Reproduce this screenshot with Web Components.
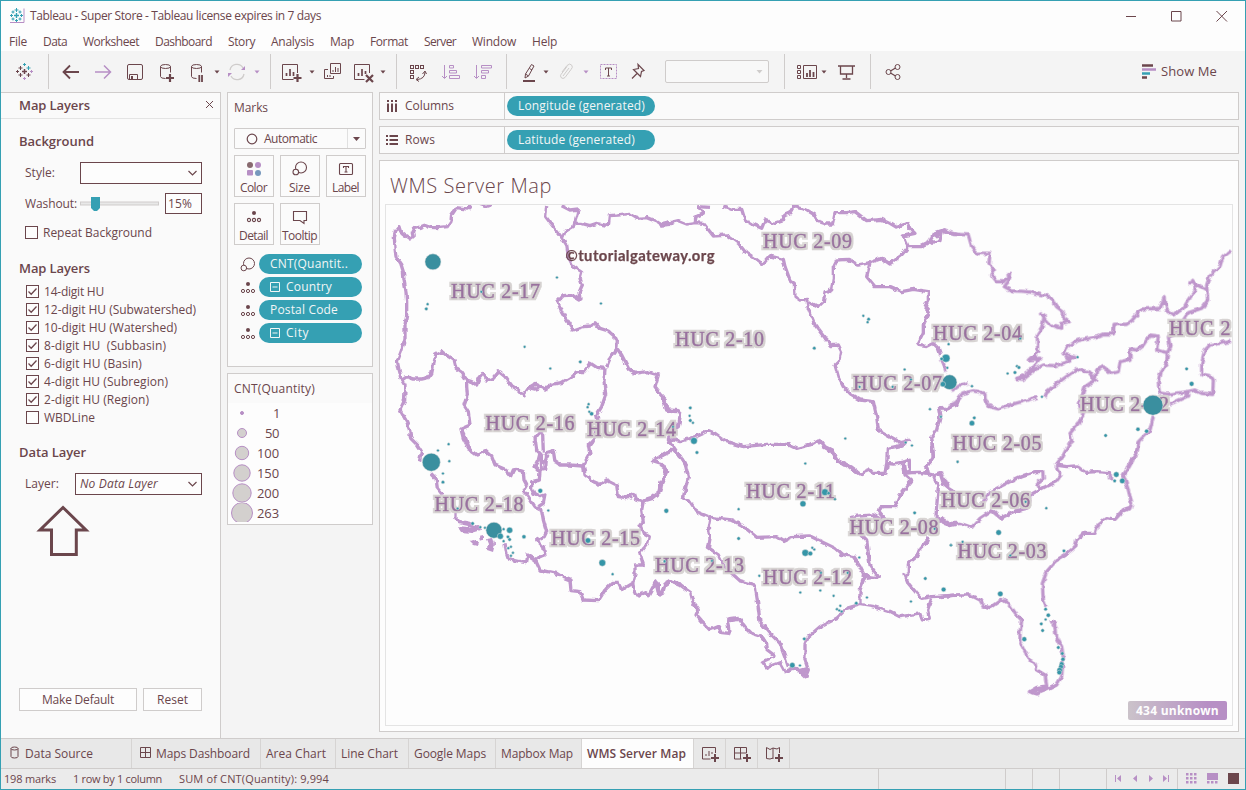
<!DOCTYPE html>
<html lang="en">
<head>
<meta charset="utf-8">
<title>Tableau - Super Store</title>
<style>
html,body{margin:0;height:100%}
body{font:12px "Open Sans","Noto Sans",sans-serif;color:#6b464c;background:#f4f4f4;overflow:hidden}
</style>
</head>
<body>
<tb-window></tb-window>
<script>
const INK='#6b464c',TEAL='#35a0b3',PUR='#b78fc5',GREY='#cfcccb';
const define=(name,css,html,after)=>customElements.define(name,class extends HTMLElement{
  connectedCallback(){
    if(this.shadowRoot)return;
    this.attachShadow({mode:'open'}).innerHTML=`<style>*{box-sizing:border-box}${css}</style>`+(typeof html==='function'?html(this):html);
    if(after)after(this);
  }
});

/* Text set to a known measure by adjusting its tracking */
define('fit-text',':host{display:inline-block;white-space:pre;flex:none}','<slot></slot>',el=>{
  const w=+el.getAttribute('w');if(!w)return;
  const n=el.textContent.length;
  el.style.letterSpacing=((w-el.getBoundingClientRect().width)/n).toFixed(3)+'px';
});

define('title-bar',`:host{display:flex;align-items:center;height:29px;padding:0 16px 0 8px;background:#fdfdfd}
.t{margin-left:5px;flex:1;padding-bottom:1px}svg{flex:none;display:block}`,
`<svg width="16" height="16" viewBox="0 0 16 16" fill="none"><path d="M15 .5V14.5H1" stroke="${PUR}"/><path d="M7.500 5v5M5 7.500h5" stroke="${TEAL}" stroke-width="1.400"/><path d="M7.500 0v4M5.500 2h4M7.500 11v3M6 12.500h3M1 7.500h3M2.500 6v3M11 7.500h3M12.500 6v3M4 2.500v3M2.500 4h3M11 2.500v3M9.500 4h3M4 9.500v3M2.500 11h3M11 9.500v3M9.500 11h3" stroke="${TEAL}"/></svg>
<span class="t"><fit-text w="291">Tableau - Super Store - Tableau license expires in 7 days</fit-text></span>
<svg width="104" height="16" viewBox="1125 8 104 16" fill="none" stroke="${INK}"><path d="M1126 16.500h10M1171.500 11.500h9.500v9.500h-9.500zM1216.500 11l10.500 10.500M1227 11l-10.500 10.500"/></svg>`);

define('menu-bar',`:host{display:flex;gap:16px;align-items:center;height:21px;padding:2px 8px 0;background:#fdfdfd}`,
[['File',18],['Data',24],['Worksheet',56],['Dashboard',57],['Story',27],['Analysis',43],['Map',24],['Format',38],['Server',32],['Window',44],['Help',25]].map(([t,w])=>`<fit-text w="${w}">${t}</fit-text>`).join(''));

const caret=(x,c=INK)=>`<path d="M${x-2.5} 70.500h5l-2.500 3z" fill="${c}" stroke="none"/>`;
const tools=[
 [16,17,`<path d="M24.500 69v5M22 71.500h5" stroke-width="1.500"/><path d="M24.500 63v3M23 64.500h3M28.500 66v4M26.500 68h4" stroke="${TEAL}"/><path d="M20.500 66v4M18.500 68h4M20.500 73v4M18.500 75h4M28.500 73v4M26.500 75h4M17.500 70v3M16 71.500h3"/><path d="M24.500 77v3M23 78.500h3M31.500 70v3M30 71.500h3" stroke="${PUR}"/>`],
 [48,1,'|'],
 [62,18,`<path d="M79 72H64M70 65.500L63.500 72l6.500 6.500" stroke-width="1.800"/>`],
 [94,18,`<path d="M95 72h15M104 65.500l6.500 6.500-6.500 6.500" stroke="${PUR}" stroke-width="1.500"/>`],
 [126,18,`<rect x="127.500" y="64.500" width="15" height="15" rx="1.500"/><path d="M129.500 79v-4.500h8V79"/><path d="M132 76v3" stroke-width="2"/>`],
 [159,16,`<path d="M160.500 66.500v10q0 2 5 2M170.500 66.500v6"/><ellipse cx="165.500" cy="66.500" rx="5" ry="2"/><path d="M170 74v8M166 78h8" stroke-width="2.200"/>`],
 [190,15,`<path d="M191.500 66.500v10q0 2 5 2M201.500 66.500v6"/><ellipse cx="196.500" cy="66.500" rx="5" ry="2"/><path d="M199.300 75v7M202 75v7" stroke-width="1.800"/>`],
 [214,6,caret(217)],
 [228,18,`<g stroke="${GREY}" stroke-width="1.300"><path d="M230 70a7 7 0 0 1 13-2M244 74a7 7 0 0 1-13 2"/></g><path d="M241 70h4v-4zM232 73h-4v4z" fill="${PUR}" stroke="none"/>`],
 [254,6,caret(257,PUR)],
 [270,1,'|'],
 [281,21,`<path d="M297.500 73v-8.500h-15v15h11"/><path d="M286.500 76v-3M290 76v-7M293.500 76v-4" stroke-width="1.700"/><path d="M297.500 74v8M293.500 78h8" stroke-width="2.200"/>`],
 [309,6,caret(312)],
 [324,18,`<path d="M330.500 63.500h10v10h-10zM328 69.500h-3.500v9h9V76"/><path d="M333 72v-2M335.500 72v-5M338 72v-4M327.500 77v-2M330 77v-2"/>`],
 [353,21,`<path d="M369.500 73v-8.500h-15v15h10"/><path d="M358.500 76v-3M362 76v-7M365.500 74v-3" stroke-width="1.700"/><path d="M366 75l7 7M373 75l-7 7" stroke-width="2.200"/>`],
 [380,6,caret(383)],
 [396,1,'|'],
 [409,18,`<rect x="410.500" y="65.500" width="3" height="3"/><rect x="415.500" y="65.500" width="3" height="3"/><rect x="420.500" y="65.500" width="3" height="3"/><rect x="410.500" y="70.500" width="3" height="3"/><rect x="410.500" y="75.500" width="3" height="3"/><path d="M425 72q0 7-8 7.500M422.500 74l2.500-3 1.500 3M419 77l-3 2.500 3 2"/>`],
 [441,20,`<g stroke="${PUR}"><path d="M444.500 65v13M442 76l2.500 2.500 2.500-2.500M449.500 65.500h4v2.500h-4zM449.500 70.500h7v2.500h-7zM449.500 75.500h10v3h-10z"/></g>`],
 [473,20,`<g stroke="${PUR}"><path d="M476.500 65v13M474 76l2.500 2.500 2.500-2.500M481.500 65.500h10v2.500h-10zM481.500 70.500h7v2.500h-7zM481.500 75.500h4v3h-4z"/></g>`],
 [506,1,'|'],
 [522,14,`<path d="M531.500 64.500l2.500 1.500-5.500 10-3.500 2 .5-4zM525.500 74l3 2M529.500 68.500l2.500 1.500"/><path d="M523 81h12" stroke-width="2"/>`],
 [543,6,caret(546)],
 [559,15,`<path d="M562 72l5-6.500q3-3 5 0 1 2-1 4l-6 8q-2 2-4 0-1-2 0-3l6-8M563 76l6-8" stroke="${GREY}"/>`],
 [583,6,caret(586,PUR)],
 [599,19,`<rect x="600.500" y="64.500" width="16" height="14" stroke="${PUR}" stroke-dasharray="2 1"/><path d="M605.500 70v-2h6v2M608.500 68v8M607 76h3"/>`],
 [631,14,`<path d="M638 64.500l6 6-2.500 1-1 5-7-7 5-1zM637 73.500l-5 5" stroke-width="1.200"/>`],
 [665,104,`<rect x="665.500" y="60.500" width="103" height="22" rx="1.500" fill="#f8f8f8" stroke="${GREY}"/><path d="M756.500 70h6l-3 3.500z" fill="${GREY}" stroke="none"/>`],
 [784,1,'|'],
 [796,22,`<path d="M797.500 65.500h3v3h-3zM797.500 70.500h3v3h-3zM797.500 75.500h3v3h-3zM803.500 65.500h13v13h-13z"/><path d="M807 77v-4M810 77v-7M813.500 77v-5" stroke-width="1.800"/>`],
 [821,6,caret(824)],
 [837,19,`<path d="M838 66h17M840.500 66v8h12v-8M846.500 74v4M842.500 79h8" stroke-width="1.300"/>`],
 [870,1,'|'],
 [885,18,`<circle cx="888.500" cy="72" r="2.500"/><circle cx="897.500" cy="67" r="2.500"/><circle cx="897.500" cy="77" r="2.500"/><path d="M890.500 71l5-3M890.500 73l5 3" stroke-width="1.300"/>`],
 [1141,17,`<g stroke-width="2.500"><path d="M1142 65.500h11"/><path d="M1142 69.500h14" stroke="${PUR}"/><path d="M1142 73.500h8" stroke="${TEAL}"/><path d="M1142 77.500h5"/></g>`]
];
let cursor=1;
define('tool-bar',`:host{display:flex;align-items:center;height:41px;background:#f4f4f4}svg{flex:none;display:block;overflow:visible}fit-text{font-size:13px;margin-left:3px;padding-bottom:2px}`,
tools.map(([x,w,s])=>{const m=x-cursor;cursor=x+w;const sep=s==='|';
 return sep?`<i style="margin-left:${m}px;width:1px;height:35px;background:${GREY}"></i>`:
 `<svg style="margin-left:${m}px" width="${w}" height="24" viewBox="${x} 60 ${w} 24" fill="none" stroke="${INK}">${s}</svg>`}).join('')+'<fit-text w="56">Show Me</fit-text>');

define('check-box',`:host{display:flex;align-items:center;gap:5px}i{width:13px;height:13px;border:1px solid ${INK};background:#fdfdfd;flex:none}svg{display:block}:host([on]) path{display:inline}path{display:none}`,
`<i><svg width="11" height="11" viewBox="0 0 11 11" fill="none" stroke="${INK}" stroke-width="1.300"><path d="M1.500 5.500l2.700 2.700L9.500 2.500"/></svg></i><slot></slot>`);
define('drop-down',`:host{display:flex;align-items:center;justify-content:space-between;height:22px;border:1px solid ${INK};background:#fdfdfd;padding:0 4px;flex:none}`,
`<span style="padding-bottom:1px"><slot></slot></span><svg width="9" height="6" fill="none" stroke="${INK}" stroke-width="1.200"><path d="M.5 1l4 4 4-4"/></svg>`);
define('push-button',`:host{display:flex;align-items:center;justify-content:center;height:23px;border:1px solid ${GREY};background:#fdfdfd;padding-bottom:1px}`,'<slot></slot>');

const layers=[['14-digit HU',60],['12-digit HU (Subwatershed)',152],['10-digit HU (Watershed)',133],['8-digit HU  (Subbasin)',122],['6-digit HU (Basin)',98],['4-digit HU (Subregion)',124],['2-digit HU (Region)',105],['WBDLine',51]];
define('layers-panel',`:host{display:flex;flex-direction:column;background:#fafafa;border:1px solid ${GREY};border-width:1px 1px 0 0}
header{display:flex;justify-content:space-between;align-items:center;height:26px;padding:0 6px 2px 18px;border-bottom:1px solid #e4e4e4}
b{font-weight:600;font-size:13px}.h{height:24px;display:flex;align-items:center;padding-left:18px}
.r{display:flex;align-items:center;padding-left:24px}.r>fit-text{padding-bottom:1px}
.list{display:grid;grid-auto-rows:18px;padding-left:25px;align-items:start}
.list check-box{height:17px}
.sl{width:79px;height:16px;margin:0 6px 0 3px}
.in{width:37px;height:21px;border:1px solid ${INK};background:#fdfdfd;display:flex;align-items:center;padding-left:2px}
footer{margin-top:auto;display:flex;gap:6px;padding:0 0 27px 18px}`,
`<header><b><fit-text w="71">Map Layers</fit-text></b><svg width="9" height="9" fill="none" stroke="${INK}"><path d="M1 1l7 7M8 1L1 8"/></svg></header>
<div class="h" style="margin-top:10px"><b><fit-text w="75">Background</fit-text></b></div>
<div class="r" style="height:40px"><fit-text w="30">Style:</fit-text><drop-down style="width:122px;margin-left:25px"></drop-down></div>
<div class="r" style="height:21px"><fit-text w="52">Washout:</fit-text><svg class="sl" viewBox="0 0 79 16"><rect x=".5" y="6" width="78" height="3" fill="#e8e8e8" stroke="${GREY}"/><path d="M11 1h9v11l-3 3h-3l-3-3z" fill="${TEAL}"/></svg><span class="in"><fit-text w="24">15%</fit-text></span></div>
<div class="r" style="height:37px;margin-bottom:1px"><check-box><fit-text w="109">Repeat Background</fit-text></check-box></div>
<div class="h" style="height:31px"><b><fit-text w="71">Map Layers</fit-text></b></div>
<div class="list">${layers.map(([t,w],i)=>`<check-box ${i<7?'on':''}><fit-text w="${w}">${t}</fit-text></check-box>`).join('')}</div>
<div class="h" style="margin:13px 0 1px"><b><fit-text w="67">Data Layer</fit-text></b></div>
<div class="r" style="height:38px"><fit-text w="34">Layer:</fit-text><drop-down style="width:127px;margin-left:16px"><em><fit-text w="78">No Data Layer</fit-text></em></drop-down></div>
<svg width="56" height="56" style="margin-left:34px" viewBox="35 503 56 56"><path d="M63 507.500l23 22.500H76.300v24.500H51.500V530H40z" fill="none" stroke="${INK}" stroke-width="3"/></svg>
<footer><push-button style="width:118px"><fit-text w="72">Make Default</fit-text></push-button><push-button style="width:59px"><fit-text w="31">Reset</fit-text></push-button></footer>`);

const sizeIcon='<circle cx="9" cy="6.500" r="5.500"/><circle cx="3.800" cy="11" r="2.800" fill="#fafafa"/>';
const detailIcon=`<circle cx="8" cy="4" r="2" fill="${INK}" stroke="none"/><circle cx="3" cy="11" r="1.600"/><circle cx="8" cy="11" r="1.600"/><circle cx="13" cy="11" r="1.600"/>`;
const cardIcons={
 Color:`<g stroke="none" fill="${PUR}"><circle cx="4" cy="4" r="3" fill="${INK}" opacity=".8"/><circle cx="12" cy="4" r="3"/><rect x="1" y="9" width="6" height="5.500" rx="1"/><circle cx="12" cy="12" r="3" fill="#7798bd"/></g>`,
 Size:sizeIcon,
 Label:'<rect x="1.500" y="2.500" width="13" height="11" rx="1"/><path d="M5.500 7V5.500h5V7M8 5.500v5.500M6.500 11h3"/>',
 Detail:detailIcon,
 Tooltip:'<path d="M1.500 2.500h13v9h-2.500v3l-4-3H1.500z"/>'};
define('marks-button',`:host{display:flex;flex-direction:column;align-items:center;width:40px;height:42px;border:1px solid ${GREY};background:#fbfbfb;padding:5px 1px 0 0}svg{display:block;flex:none}fit-text{line-height:18px;margin-top:2px}`,
el=>`<svg width="16" height="16" fill="none" stroke="${INK}" stroke-width="1.100">${cardIcons[el.getAttribute('name')]}</svg><fit-text w="${el.getAttribute('w')}">${el.getAttribute('name')}</fit-text>`);
define('field-pill',`:host{display:flex;align-items:center;height:20px;border-radius:10px;background:${TEAL};color:#f2f6f6;padding:0 0 1px 11px}svg{margin-right:6px;display:none}:host([box]) svg{display:block;margin-top:1px}`,
`<svg width="10" height="10" fill="none" stroke="#f2f6f6"><path d="M.5.500h9v9h-9zM2.500 5h5"/></svg><slot></slot>`);
define('marks-card',`:host{display:block;height:275px;border:1px solid ${GREY};background:#fafafa;padding:0 6px}
h3{margin:0;font:inherit;height:35px;display:flex;align-items:center}
.dd{display:flex;align-items:center;height:21px;border:1px solid ${GREY};border-radius:1px;background:#fbfbfb}
.dd i{margin-left:auto;width:18px;height:19px;border-left:1px solid #e0e0e0;display:grid;place-items:center}
.g{display:grid;grid-template-columns:repeat(3,40px);gap:6px;margin-top:6px}
.f{display:flex;gap:3px;align-items:center;height:20px;margin-bottom:3px;padding-left:6px}.f field-pill{width:103px}svg{display:block;flex:none}`,
`<h3><fit-text w="34" style="margin-top:-6px">Marks</fit-text></h3>
<div class="dd"><svg style="margin:0 6px 0 11px" width="12" height="12" fill="none" stroke="${INK}" stroke-width="1.200"><circle cx="6" cy="6" r="4.800"/></svg><fit-text w="53">Automatic</fit-text><i><svg width="7" height="4"><path d="M0 0h7L3.500 4z" fill="${INK}"/></svg></i></div>
<div class="g"><marks-button name="Color" w="27"></marks-button><marks-button name="Size" w="21"></marks-button><marks-button name="Label" w="27"></marks-button><marks-button name="Detail" w="29"></marks-button><marks-button name="Tooltip" w="35"></marks-button></div>
<div style="height:9px"></div>
${[['CNT(Quantit..',78],['Country',46,1],['Postal Code',68],['City',23,1]].map(([t,w,b],i)=>`<div class="f"><svg width="16" height="15" fill="none" stroke="${INK}">${i?detailIcon:sizeIcon}</svg><field-pill ${b?'box':''}><fit-text w="${w}">${t}</fit-text></field-pill></div>`).join('')}`);
define('size-legend',`:host{display:block;height:152px;border:1px solid ${GREY};background:#fdfdfd;overflow:hidden}
h3{margin:0;font:inherit;height:29px;display:flex;align-items:center;padding-left:6px;background:#fafafa}
.r{display:flex;align-items:center;height:20px;font-size:13px}.r:last-child svg{clip-path:inset(0 0 1px)}svg{margin-left:3px}.r fit-text{margin-left:auto}.r span{display:flex;width:26px;margin-right:auto}`,
`<h3><fit-text w="81">CNT(Quantity)</fit-text></h3>`+[[1,1.500,6],[50,4.500,14],[100,6.700,22],[150,8.200,22],[200,9.200,22],[263,10.500,22]].map(([n,r,w])=>`<div class="r"><svg width="22" height="20"><circle cx="11" cy="10" r="${r}" fill="${n<2?PUR:'#d3d0ce'}" stroke="${PUR}"/></svg><span><fit-text w="${w}">${n}</fit-text></span></div>`).join(''));

define('data-shelf',`:host{display:flex;height:28px;border:1px solid ${GREY};background:#fafafa;align-items:center}
.n{display:flex;align-items:center;gap:7px;width:125px;height:26px;padding-left:6px;border-right:1px solid ${GREY}}.n fit-text{padding-bottom:1px}
field-pill{width:148px;margin-left:2px}`,
el=>{const c=el.getAttribute('name')==='Columns';return `<div class="n"><svg width="12" height="12" fill="none" stroke="${INK}" stroke-width="2">${c?'<path d="M2 0v2M2 3.500v8.500M6 0v2M6 3.500v8.500M10 0v2M10 3.500v8.500"/>':'<path d="M0 2h2M3.500 2h8.500M0 6h2M3.500 6h8.500M0 10h2M3.500 10h8.500"/>'}</svg><fit-text w="${c?49:30}">${c?'Columns':'Rows'}</fit-text></div><field-pill><fit-text w="${c?127:117}">${c?'Longitude':'Latitude'} (generated)</fit-text></field-pill>`});

/* Basin outlines, stored per map tile: origin of the tile, then polylines in thirds of a pixel */
const tiles=[
[380,195,[
'335,28 318,34 300,28 M275,30 262,42 230,38 215,60 213,80 203,95 180,97 165,98 148,97 140,90 130,92 120,97 103,100 97,112 100,125 90,132 75,122 62,112 57,95 47,108 43,125 45,160 48,185 62,205 70,230 72,255 78,290 80,320 80,360 75,390 75,430 65,465 52,500 58,530 65,555 75,572 74,615 60,645 80,680 88,700 92,730 112,750 125,770',
'65,555 80,545 100,552 125,552 145,548 155,535 160,510 167,480 185,470 205,485 222,495 228,520 245,532 260,555 275,560 290,570 298,550 310,535 322,558 340,550 357,530 375,545 395,572 415,585 430,602 445,580 465,568 495,582 520,567 545,563 570,548 590,530 612,530 632,505 650,517 675,520',
'445,578 465,582 490,574','675,520 672,560 677,600 665,635 650,660 657,690 640,735 625,755',
'260,555 260,575 262,600 252,630 265,650 270,690 243,702 250,730 265,758 278,775',
'500,30 497,65 520,95 547,130 560,150 565,185 580,215 605,232 600,250 607,270 597,292 600,315 575,300 550,302 533,320 545,350 560,375 580,405 610,395 635,393 645,383 660,400 685,408 705,425 712,440 710,462 690,490 680,515',
'547,130 555,110 580,95 588,70 595,42 570,45 545,32','588,85 605,85 630,92 650,85 685,92 688,62 715,60 745,55 770,70 800,68 830,80 845,90 870,88',
'712,462 725,480 745,520 765,535 800,530 835,540 825,575 845,600 860,645 880,650']],
[380,430,[
'125,65 118,95','153,130 168,145 172,175 188,195','228,245 228,265 240,278 262,282 280,286','375,340 380,370 385,385 400,390 420,395 440,398 443,375 465,388',
'245,0 255,20 270,60 290,75 315,62 335,80 345,105 375,118 392,138 400,120 410,118 430,125 432,150 440,165 430,182 445,200 465,230 485,240 490,270 500,305 493,320 470,330 490,350 495,375 465,388',
'490,65 488,15 478,8 465,25 470,60 480,70 475,90 465,110 480,125 478,150 455,155 455,175 462,190 480,200 495,195 490,220 475,230','483,70 485,120 497,118 500,68 520,62 525,95 540,105 570,105 608,108','497,70 503,80 492,100','640,30 625,45 630,70 610,105 615,135 640,155 660,163 680,150 710,165 715,200 735,203 760,190 765,205 790,213 785,240 790,275 780,285 790,310 808,320 803,340 780,370 790,405 765,405 765,435 758,460 725,480 715,460 695,460 675,480 655,512 610,510 600,485 573,482 570,450 545,440 530,430 505,425 480,420 465,388',
'740,195 755,205','758,460 765,490 778,495 795,488 805,497 820,470 828,452 830,465 838,495 848,490 855,462 875,452 900,465','828,455 835,460 835,490',
'790,213 815,205 840,185 845,160 860,125 845,100 820,93 840,80 870,65 880,50']],
[660,200,[
'0,75 30,68 55,62 80,72 105,68 130,70 160,108 200,105 235,130 255,155 285,175 308,193 330,168 370,178 375,200 390,240 403,250 405,290 420,300 440,298 445,325 465,375 495,415 515,437 535,435 545,455 540,480 525,495 535,530 550,560 575,585 600,600 640,605 650,650 655,690 685,708 720,728 750,720',
'105,68 108,50 130,40 115,20 150,22','190,18 215,28 245,28 255,60 275,72 305,85 315,60 345,70 370,62 375,45 390,38 400,20 440,30 465,45 475,65 495,72 518,72 525,38 560,38 585,35 620,62 665,58 690,70 710,82 740,68 750,85 765,100 730,108 745,140 780,140 810,125 820,100 850,90 870,100 900,105','810,128 840,122 845,95 820,110 835,105','368,45 375,62',
'745,140 725,165 690,192 665,175 630,188 595,195 565,178 530,180 520,200 520,235 515,270 495,275 490,305 475,320 445,305','500,268 515,275',
'630,188 620,230 645,260 690,260 725,275 760,268 805,275 805,300 795,320 808,335 790,375 790,400 772,435 800,440 820,430 835,445 842,465',
'0,585 15,600 20,630 55,632 62,640 55,680 35,690 45,720 25,720 40,745 0,770','40,745 58,765 80,800','25,700 28,725','45,720 60,725 90,715 110,708 145,692 165,700 200,725 250,740 320,733 385,733 410,745 450,735 475,720 490,740 515,755 530,780 570,805',
'680,800 682,745 730,735 742,718','835,625 860,628 890,615 900,590','835,620 840,650 830,690 815,710 820,770 800,800','848,490 852,505']],
[660,440,[
'0,75 15,85 15,110 2,130 2,150','40,20 75,70 85,110 70,175 90,185 110,215 150,232','480,0 495,20 515,30 530,60 570,80 600,102 630,90 640,100 675,100 680,70 700,72 735,65 748,60 748,90 735,100 755,98 780,97 800,100 820,105','680,70 680,90','730,70 735,105 755,122 720,165 705,200 665,200 655,215 672,235','795,80 805,95',
'570,232 600,228 640,225 665,240','605,285 620,300 625,340 630,375 655,410 620,415',
'150,232 215,240 245,255 290,292 350,290 370,302 395,290 450,288 485,305 525,325 545,343 580,350 600,380 615,410 600,450 600,493','605,405 640,412',
'150,232 145,260 150,295 145,325 175,345 190,375 215,400 240,422 285,435 292,480 300,545 330,580 360,610 375,650 385,680',
'0,465 15,435 35,422 60,435 92,458 100,490 115,510 108,525 125,545 150,570 175,560 185,578 207,580 203,540 235,535 255,560 275,580 305,590 320,610 322,630 342,645 330,655 307,665 320,682 360,668 375,695 400,685 410,685 437,710 445,690 435,660 435,615 445,590 480,560 530,535 560,505 600,493 640,500 690,515 720,530 780,522 787,540 808,535 803,510 815,475','420,692 445,685','425,700 445,692',
'805,290 800,305 780,325 770,350 745,370 745,400 735,405 745,430 770,460 785,475 815,470 900,465','820,105 835,140 830,200 828,230 850,250 870,257 900,250','820,105 840,98 850,130 880,155','815,0 820,50 800,80 800,100']],
[940,200,[
'0,110 10,90 45,103 85,105 95,140 110,160 150,160 147,190 163,210 155,225 170,245 190,245 212,220 205,245 193,260 215,272 265,275 330,290 350,320 370,335 370,355 385,365 365,370 365,385 330,375 312,355 300,335','200,230 210,235','298,340 312,345 312,355 305,385 292,405 293,455 265,480 300,475 275,505 260,525 230,535 250,538 290,505 310,495 345,497 375,487 405,470 370,462 385,440 410,422 470,410 490,402 520,402 522,373 560,373 575,362 605,327 660,325 675,290 680,330 700,345 730,325 745,300 765,272 765,250 745,248','255,520 285,502','285,462 290,480','375,470 390,480 400,465','668,310 680,312','755,238 765,250 800,268','873,152 848,172 840,198 808,230 800,255 803,300 785,325 745,338 730,360 710,400 685,410 690,440 682,460 680,490 660,520 655,545 658,578 685,583 740,575 740,590 690,612','740,575 765,570 785,580 818,583 820,540 812,528 785,522 785,490 795,450 810,435 870,425','840,430 870,420','735,580 750,590',
'682,458 650,450 655,408 630,405 610,435 590,450 570,447 570,478 540,485 535,515 515,520 490,500 470,510 465,540 445,515 410,508 365,540 320,575 315,592','290,592 270,598 220,612 175,627 150,620 135,600 135,580 100,572 65,582 50,605 20,625 0,628','35,572 60,555 85,548','465,540 435,560 425,590 415,610 430,640 415,670 390,700 395,720 370,765 348,795','455,535 470,545','640,650 630,690 595,725 590,760 565,805','0,480 12,495 18,515']],
[940,440,[
'595,5 590,40 570,65 560,90 550,105 565,150 575,190 570,205 550,212 525,238 500,233 475,252 465,280 430,280 410,300 405,320 375,345 350,360 320,395 307,430 310,480 318,500','335,540 348,565 350,590 365,620 370,650 365,710 350,735 320,750 290,762 268,755 290,742 320,738 315,705 290,690 285,668 268,660 240,605 240,580 245,540 230,525 205,490 185,478 150,503 130,498 120,480 90,465 50,465 0,470','275,752 310,748 325,740','343,545 348,590','348,75 380,80 410,78 435,97 470,95 510,98 512,118','348,75 352,90 363,105 348,125 320,138 275,162','300,150 292,130 310,115 308,95 285,95 245,108 215,122 180,140 150,155 130,185 120,190','0,235 30,250 60,250 95,262 120,235 155,212 182,235 220,215 260,205 275,162','0,95 15,125 35,150']]];
const dots=[
[380,195,'158,200,24 138,341,5 142,327,4 530,247,4 662,325,4 303,290,4 433,455,4 510,520,4 600,500,5 625,627,4 622,636,4 627,650,4 634,656,6 205,747,4 173,766,4'],
[380,430,'153,96,27 207,93,4 188,130,4 188,156,5 232,235,4 277,280,5 300,291,4 314,293,4 341,300,24 360,318,9 370,297,4 388,300,9 383,320,5 388,328,5 370,333,4 392,350,4 398,368,4 392,377,4 384,354,4 431,320,6 480,182,7 504,241,4 623,331,8 666,398,10 697,432,4 858,242,7 853,395,4'],
[660,200,'609,347,4 625,357,5 622,366,4 462,444,5 865,432,4 857,474,12 844,476,5 861,503,4 868,546,22 848,552,8 733,508,4 752,538,4 598,560,4 697,560,4 809,627,4 841,650,4 90,623,5 88,647,4 90,661,5 98,668,4 101,722,10 110,757,5 555,715,4 736,727,4 755,736,4 435,790,4 38,680,4'],
[660,440,'235,207,4 235,295,5 428,191,9 494,156,10 505,159,5 524,177,4 435,338,10 450,340,7 456,323,4 462,328,4 297,407,4 420,457,4 480,451,4 482,398,4 562,398,4 520,467,4 530,507,4 540,497,4 537,511,4 544,514,4 588,489,5 620,472,4 597,352,4 763,218,5 752,484,4 795,415,5 850,448,7 872,315,4 432,596,5 396,675,8 419,676,4 823,266,4 155,362,4 13,363,4 892,65,4'],
[940,200,'230,498,4 236,502,5 224,517,5 202,520,4 412,471,4 95,558,4 305,590,4 102,653,5 95,669,8 52,785,4 638,615,30 739,506,5 754,551,7 496,706,5 593,687,6 619,693,6 2,650,4 240,415,4'],
[940,440,'528,103,8 546,122,8 523,122,5 256,185,4 318,204,4 175,277,8 67,305,4 32,315,4 210,346,4 371,332,5 180,461,8 252,597,7 316,507,5 324,525,6 316,538,4 303,551,5 307,571,5 354,622,5 366,640,5 368,657,6 364,672,7 362,680,7 358,690,8 357,697,7']];
const names=[[451,297.5,'2-17'],[485.5,430,'2-16'],[587,436,'2-14'],[434.5,511,'2-18'],[551,545,'2-15'],[655,572,'2-13'],[763,584,'2-12'],[746,498,'2-11'],[849.5,534,'2-08'],[763,248,'2-09'],[675,346,'2-10'],[853,389.5,'2-07'],[933,339.5,'2-04'],[1169,334.5,'2',61.5],[1080,410.5,'2-02'],[952.5,449.5,'2-05'],[941,507,'2-06'],[957.5,558,'2-03']];
const rivers=()=>tiles.map(([x,y,ls])=>`<g transform="translate(${x} ${y}) scale(.33333)">${ls.map(l=>`<path d="M${l}"/>`).join('')}</g>`).join('');
define('basin-map',`:host{display:block;position:relative;border:1px solid #e4e4e4;height:522px;overflow:hidden}svg{display:block}
span{position:absolute;right:5px;bottom:5px;width:99px;height:19px;border-radius:2px;background:linear-gradient(90deg,#cbc3ca,#b78fc5 80%);color:#fdfdfd;font-weight:700;display:flex;align-items:center;justify-content:center}
text{white-space:pre}`,
()=>`<svg width="846" height="520" viewBox="386 205 846 520">
<filter id="river" filterUnits="userSpaceOnUse" x="386" y="205" width="846" height="520" color-interpolation-filters="sRGB"><feTurbulence type="fractalNoise" baseFrequency=".2" numOctaves="1" seed="4"/><feDisplacementMap in="SourceGraphic" scale="5" xChannelSelector="R" yChannelSelector="G"/></filter>
<filter id="halo" filterUnits="userSpaceOnUse" x="386" y="205" width="846" height="520"><feMorphology in="SourceAlpha" operator="dilate" radius="1.500"/><feComposite in2="SourceAlpha" operator="over" result="h"/><feFlood flood-color="#d5d1d0"/><feComposite in2="h" operator="in"/><feMerge><feMergeNode/><feMergeNode in="SourceGraphic"/></feMerge></filter>
<g filter="url(#river)" fill="none" stroke="#bf97cc" stroke-width="10" stroke-linejoin="round">${rivers()}
<g stroke="none" fill="#bf97cc"><path d="M457 526l10 1 12-2 2 5-10 3-10-1zM469 541l5-1 4 3-1 3-4-1zM479 537l4-1v4l-3 1zM486 539l7-1 2 6-2 8-6-2 1-6z"/></g></g>
<g filter="url(#halo)" font-family="Liberation Serif,serif" font-size="20" fill="#99709f" stroke="#99709f" stroke-width=".5">${names.map(([x,y,n,w])=>`<text x="${x}" y="${y}" textLength="${w||89}">HUC ${n}</text>`).join('')}</g>
${dots.map(([x,y,s])=>s.split(' ').map(p=>{const[a,b,r]=p.split(',');return `<circle cx="${x+a/3+.3}" cy="${y+b/3+.2}" r="${r/3}" fill="${r>20?'#3a8f9f':'#3596a8'}" stroke="#dcdcdc" stroke-width=".5"/>`}).join('')).join('')}
<text x="565.500" y="261" textLength="149" font-family="Lato,sans-serif" font-weight="700" font-size="14.800" fill="${INK}" stroke="${INK}" stroke-width=".25">©tutorialgateway.org</text>
</svg><span><fit-text w="83">434 unknown</fit-text></span>`);
define('viz-pane',`:host{display:block;height:572px;border:1px solid ${GREY};background:#fdfdfd;padding:0 5px}h1{margin:0;height:43px;padding:8px 0 0 5px;font:300 20px/34px "Open Sans",sans-serif}`,
`<h1><fit-text w="162">WMS Server Map</fit-text></h1><basin-map></basin-map>`);

const tabs=[['Data Source',68,131,9,'<path d="M1 2.500v8q0 1.500 3.500 1.500T8 10.500v-8"/><ellipse cx="4.500" cy="2.500" rx="3.500" ry="1.500"/>'],['Maps Dashboard',94,129,8,'<path d="M.5 1.500h10v10H.5zM.5 6.500h10M5.500 1.500v10"/>'],['Area Chart',60,75],['Line Chart',57,73],['Google Maps',72,87],['Mapbox Map',72,86],['WMS Server Map',99,112]];
const plus='<path d="M14 9v8M10 13h8" stroke-width="2"/>';
define('sheet-tabs',`:host{display:flex;height:30px;background:#e8e8e8;border-top:1px solid ${GREY}}
div{display:flex;align-items:center;border-right:1px solid #d6d4d3;padding:0 0 1px 5px}svg{flex:none;display:block}.on{background:#fdfdfd;font-weight:600}i{width:32px;border-right:1px solid #d6d4d3;display:grid;place-items:center;padding-left:1px}`,
tabs.map(([t,w,W,p,ic],i)=>`<div class="${i===6?'on':''}" style="width:${W}px;${ic?`padding-left:${p}px`:''}">${ic?`<svg style="margin-right:${i?4:3}px" width="12" height="14" fill="none" stroke="${INK}">${ic}</svg>`:''}<fit-text w="${w}">${t}</fit-text></div>`).join('')+
['<path d="M14.500 8V2.500H1.500v11.500h8M5 11V9M8 11V6M11 9V7"/>','<path d="M13.500 8V2.500H1.500v11.500h7M1.500 8h12M7.500 2.500V14"/>','<path d="M14.500 8V2.500L12 4 8 3v11M8 3L5 4.500 1.500 2.500v11L5 14l3-1"/>'].map(s=>`<i><svg width="19" height="18" fill="none" stroke="${INK}">${s}${plus}</svg></i>`).join(''));
define('status-bar',`:host{display:flex;height:21px;background:#ebebeb;border-top:1px solid ${GREY};font-size:11px;align-items:center;padding:0 1px 0 3px;gap:17px}fit-text{padding-bottom:1px}
.c{margin-left:auto;display:flex;height:100%}.c i{border-left:1px solid ${GREY};display:flex;align-items:center}`,
`<fit-text w="52">198 marks</fit-text><fit-text w="89">1 row by 1 column</fit-text><fit-text w="150">SUM of CNT(Quantity): 9,994</fit-text>
<span class="c"><i style="width:127px"></i><i style="width:27px"></i><i style="width:27px"></i><i style="width:47px"></i><i style="width:71px"><svg width="70" height="14" fill="${PUR}"><path d="M8 3h1v7H8zM14 3v7l-4-3.500zM30 3v7l-4-3.500zM42 3v7l4-3.500zM56 3v7l4-3.500zM61 3h1v7h-1z"/></svg></i><i style="width:67px"><svg width="64" height="14"><g fill="${PUR}">${[0,1,2].map(a=>[0,1,2].map(b=>`<rect x="${8+a*4}" y="${1+b*4}" width="2.500" height="2.500"/>`).join('')+`<rect x="${29+a*4}" y="9" width="2.500" height="2.500"/>`).join('')}<rect x="29" y="1" width="11" height="7"/></g><rect x="50" y="1" width="11" height="11" fill="${INK}"/></svg></i></span>`);

define('tb-window',`:host{display:grid;grid-template-rows:29px 21px 41px 646px 30px 21px;width:1246px;height:790px;border:1px solid ${TEAL};background:#f4f4f4;box-sizing:border-box}
main{display:grid;grid-template-columns:220px 146px 860px;gap:6px;min-height:0}
section{display:flex;flex-direction:column;gap:6px}`,
`<title-bar></title-bar><menu-bar></menu-bar><tool-bar></tool-bar><main><layers-panel></layers-panel><section><marks-card></marks-card><size-legend></size-legend></section><section><data-shelf name="Columns"></data-shelf><data-shelf name="Rows"></data-shelf><viz-pane></viz-pane></section></main><sheet-tabs></sheet-tabs><status-bar></status-bar>`);
</script>
</body>
</html>
